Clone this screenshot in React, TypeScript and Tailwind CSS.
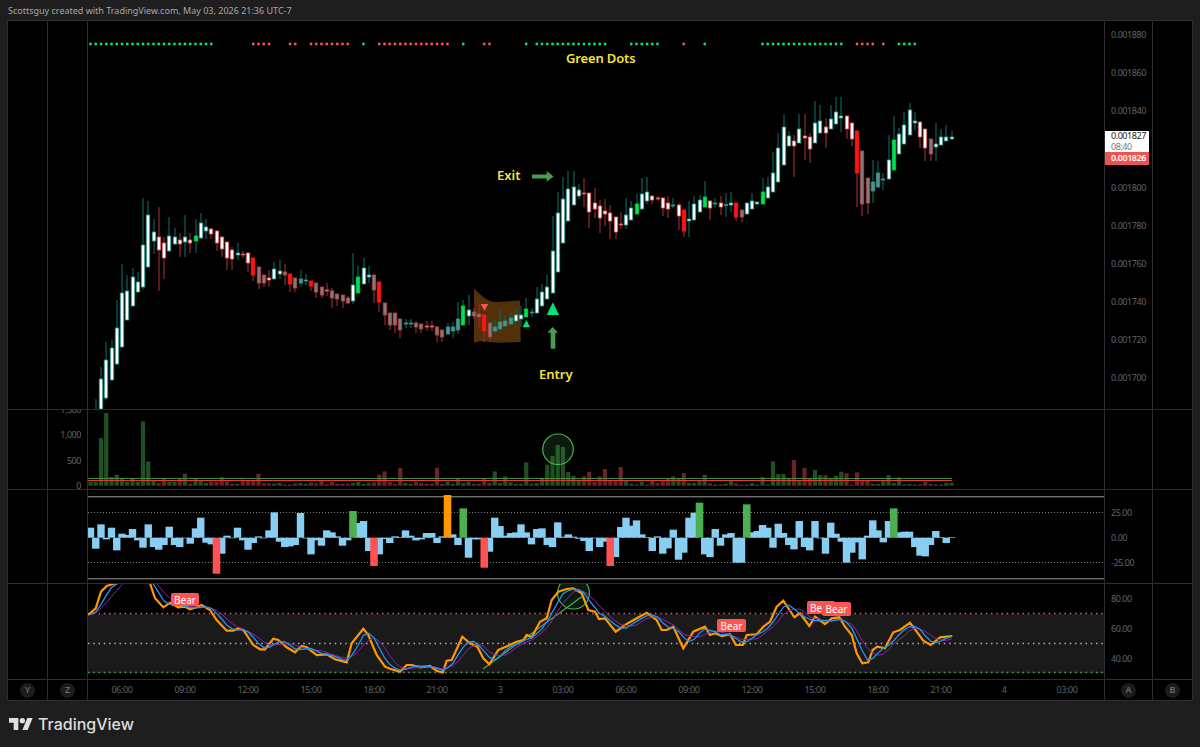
const xAt = (i: number) => 122 + 5.25 * i;

// wick top, body top, body bottom, wick bottom, kind (starts at bar -5)
const candles: [number, number, number, number, string][] = [
  [399, 409.5, 411, 411, "w"], [367, 379, 409, 410, "w"], [342, 360, 398, 400, "w"], [340, 348, 380, 380, "w"], [300, 328, 364, 365, "w"],
  [264, 293, 347, 347, "w"], [275, 291, 320, 320, "w"], [268, 277, 306, 306, "w"], [272, 282, 292, 292, "w"], [198, 245, 287, 289, "w"],
  [201, 215, 267, 267, "w"], [219, 232, 241, 254, "w"], [207, 237, 250, 291, "r"], [237, 243, 258, 279, "r"], [217, 236, 251, 251, "w"],
  [228, 237, 244, 245, "w"], [233, 240, 244, 257, "r"], [215, 237, 242, 257, "w"], [233, 240, 243, 253, "r"], [219, 236, 241, 253, "g"],
  [213, 223, 238, 239, "w"], [219, 227, 231, 239, "w"], [228, 229, 234, 239, "r"], [230, 231, 243, 251, "r"], [237, 237, 249, 257, "r"],
  [242, 242, 258, 270, "r"], [247, 250, 259, 270, "r"], [243, 253, 255, 260, "w"], [251, 254, 255, 258, "r"], [253, 253, 263, 272, "r"],
  [258, 258, 275, 281, "R"], [267, 267, 283, 289, "y"], [275, 275, 283, 287, "y"], [270, 278, 280, 287, "r"], [262, 269, 279, 279, "w"],
  [260, 271, 274, 279, "w"], [264, 272, 275, 285, "y"], [274, 274, 284, 292, "R"], [278, 278, 288, 292, "y"], [270, 279, 283, 287, "x"],
  [274, 280, 281, 285, "w"], [281, 281, 286, 291, "R"], [283, 283, 292, 298, "y"], [287, 287, 295, 298, "y"], [283, 290, 291, 296, "r"],
  [288, 291, 298, 308, "y"], [294, 294, 299, 306, "y"], [295, 295, 301, 308, "y"], [296, 298, 303, 304, "y"], [253, 285, 301, 304, "w"],
  [266, 277, 293, 293, "g"], [258, 268, 284, 284, "w"], [266, 275, 277, 283, "w"], [275, 275, 290, 303, "y"], [282, 282, 302, 312, "R"],
  [303, 303, 315, 325, "y"], [313, 313, 325, 330, "y"], [313, 313, 325, 333, "y"], [319, 319, 330, 338, "y"], [319, 323, 324, 328, "x"],
  [319, 323, 324, 328, "x"], [321, 323, 327, 333, "y"], [324, 324, 329, 333, "y"], [321, 326, 327, 331, "r"], [321, 326, 327, 331, "r"],
  [326, 327, 335, 342, "y"], [330, 330, 337, 342, "y"], [323, 327, 334, 334, "x"], [322, 327, 331, 338, "x"], [302, 319, 330, 334, "x"],
  [300, 306, 325, 325, "g"], [295, 310, 316, 325, "w"], [308, 312, 316, 319, "y"], [303, 314, 317, 327, "y"], [315, 315, 331, 342, "R"],
  [323, 323, 337, 342, "y"], [319, 327, 331, 333, "x"], [310, 322, 329, 329, "x"], [315, 321, 326, 326, "x"], [313, 318, 324, 324, "x"],
  [309, 315, 321, 321, "w"], [306, 315, 319, 327, "w"], [298, 309, 317, 317, "g"], [308, 312, 313, 317, "x"], [287, 299, 313, 313, "w"],
  [284, 292, 306, 306, "w"], [275, 287, 299, 299, "w"], [216, 251, 293, 293, "w"], [192, 213, 272, 272, "w"], [177, 199, 243, 243, "w"],
  [171, 189, 221, 221, "w"], [171, 187, 205, 205, "w"], [184, 190, 196, 199, "w"], [178, 193, 194, 207, "r"], [193, 193, 212, 228, "r"],
  [188, 203, 209, 218, "r"], [200, 206, 218, 233, "r"], [199, 211, 214, 226, "r"], [205, 213, 221, 239, "r"], [217, 217, 232, 239, "r"],
  [212, 224, 225, 229, "r"], [198, 215, 225, 229, "w"], [201, 208, 220, 220, "w"], [194, 204, 214, 214, "g"], [178, 194, 209, 209, "w"],
  [177, 192, 201, 204, "w"], [196, 196, 200, 204, "r"], [196, 198, 199, 201, "r"], [198, 198, 208, 216, "r"], [196, 203, 209, 218, "r"],
  [198, 205, 206, 208, "x"], [203, 205, 216, 230, "r"], [210, 210, 231, 237, "R"], [201, 219, 221, 237, "w"], [196, 204, 220, 220, "w"],
  [195, 200, 212, 212, "w"], [181, 197, 207, 207, "g"], [200, 201, 208, 220, "r"], [198, 203, 204, 207, "x"], [196, 203, 207, 215, "r"],
  [193, 204.5, 205.5, 217, "x"], [192, 203, 205, 212, "w"], [203, 203, 217, 221, "R"], [210, 210, 217, 222, "y"], [203, 203, 214, 214, "w"],
  [193, 201, 209, 209, "w"], [202, 202, 204, 204, "w"], [178, 192, 204, 204, "g"], [177, 187, 198, 198, "w"], [152, 173, 192, 192, "w"],
  [133, 148, 182, 182, "w"], [114, 127, 165, 165, "w"], [131, 136, 146, 146, "w"], [135, 141, 146, 177, "r"], [114, 129, 143, 143, "w"],
  [114, 136, 138, 160, "r"], [133, 137, 149, 163, "r"], [101, 123, 143, 143, "w"], [105, 121, 133, 133, "w"], [118, 127, 133, 148, "r"],
  [105, 119, 129, 129, "w"], [97, 112, 124, 124, "w"], [97, 116, 118, 132, "w"], [116, 116, 129, 139, "r"], [123, 123, 139, 146, "r"],
  [131, 131, 173, 207, "R"], [151, 151, 204, 216, "y"], [178, 178, 203, 214, "y"], [160, 182, 191, 203, "x"], [161, 173, 187, 187, "x"],
  [173, 179, 180, 190, "x"], [135, 160, 179, 179, "w"], [116, 140, 170, 170, "g"], [128, 134, 154, 154, "w"], [112, 125, 144, 144, "w"],
  [103, 110, 135, 135, "w"], [112, 121, 123, 130, "w"], [122, 122, 137, 148, "r"], [129, 129, 148, 161, "r"], [139, 139, 154, 161, "y"],
  [123, 144, 147, 161, "w"], [129, 137, 145, 145, "w"], [125, 137, 141, 141, "w"], [131, 137, 139, 139, "w"],
];

const kinds: Record<string, { fill: string; line: string; wick: string }> = {
  w: { fill: "#ffffff", line: "#1c9a8c", wick: "#0f5f57" },
  r: { fill: "#ffffff", line: "#e5484d", wick: "#8e2b2b" },
  g: { fill: "#00e052", line: "#00c94a", wick: "#0f5f57" },
  R: { fill: "#ff1414", line: "#ff1414", wick: "#8e2b2b" },
  x: { fill: "#64888c", line: "#1c9a8c", wick: "#0f5f57" },
  y: { fill: "#7c7c7c", line: "#b83c40", wick: "#8e2b2b" },
};

const dotRuns: [number, number, string][] = [
  [-6, 17, "#00e676"], [25, 28, "#ff5252"], [32, 33, "#ff5252"], [36, 43, "#ff5252"], [46, 46, "#00e676"], [49, 62, "#ff5252"],
  [65, 65, "#00e676"], [69, 70, "#ff5252"], [77, 77, "#00e676"], [79, 92, "#00e676"], [97, 102, "#00e676"], [107, 107, "#ff5252"],
  [111, 111, "#00e676"], [122, 137, "#00e676"], [140, 143, "#ff5252"], [145, 145, "#ff5252"], [148, 151, "#00e676"],
];

// volume bars from -6, height * 3, positive green, negative red
const volume = [
  12, 12, 143, 218, 26, 33, 20, 12, 23, 12, 193, 73, 14, -8, -23, 11, 11, -21, 36, -6, 20, 14, 8, -12, -12, -26, -12, -6, 6, -18,
  -15, -15, -36, -7, -7, 6, 8, -4, -4, -7, 8, 6, -9, -7, -15, -5, -11, -6, -6, -6, 8, 11, 5, 8, -10, -33, -43, -11, -5, -53, 8, 6,
  -11, -8, -6, -6, -54, -6, 12, 6, 20, 8, 12, -6, -6, -20, -8, 43, 8, 28, 10, 6, 6, 70, 6, 8, 22, 63, 89, 122, 116, 41, 30, 18,
  -28, -42, -11, -28, -50, -16, -16, -56, 14, 6, 4, 13, 4, -16, -8, -16, -20, 28, 22, -38, 8, 8, 14, 33, -7, 4, -4, 6, 14, -7, -4,
  4, 8, 4, 26, 4, 73, 35, 35, 22, -77, 14, -53, -22, 47, 32, -32, 22, 30, 42, -37, -4, -40, -16, -16, 6, 6, 14, 32, 8, 25, 4, 5, 4,
  -4, -11, -6, 4, 4, 8, 9,
];

// histogram from -6, value * 3 above the zero line
const hist = [
  30, -33, 40, -5, 30, -38, 12, 8, 26, -8, -30, 40, -28, -36, -22, 33, -22, -28, 0, -18, 28, 60, -15, -20, -108, -48, 6, -1, 30, -8,
  -36, -16, 4, 0, 22, 76, -12, -28, -26, -22, 74, -2, -50, -8, -24, 22, 16, 4, -24, -8, 80, 44, 50, -40, -85, -50, -4, -16, 4, 2, 22,
  6, -8, -5, 14, 14, -16, 4, 128, 10, -22, 88, -60, -5, -5, -90, -42, 60, 35, 6, 14, 16, 40, 16, -20, 26, 28, -22, -28, 46, 3, 10, 3,
  -3, -10, -40, 0, -28, -12, -85, -58, 32, 60, 36, 52, 10, 2, -40, 4, -48, -32, 24, -66, -45, 60, 75, 105, -50, -58, 26, -24, 10, 14,
  -75, -75, 100, 16, 20, 38, 30, -30, 42, 14, -22, -35, 50, -28, -38, 50, -2, -48, 45, 12, -12, -75, -45, -14, -65, 6, 52, 22, -14,
  50, 88, 16, 18, 18, -28, -54, -56, -22, 20, 2, -16, 2,
];
const histColor: Record<number, string> = {
  18: "#ff5252", 44: "#4caf50", 48: "#ff5252", 62: "#ff9800", 65: "#4caf50", 69: "#ff5252", 93: "#ff5252", 110: "#4caf50", 119: "#4caf50", 147: "#4caf50",
};

// orange line read in three strips of the picture
const orange: [number, number][] = [
  ...[[265, 645], [287, 625], [303, 575], [320, 558], [345, 550], [380, 520], [420, 525], [450, 550], [465, 595], [490, 622], [510, 608], [535, 622], [555, 620], [570, 628], [590, 622], [605, 615], [630, 630], [650, 660], [680, 692], [700, 692], [715, 685], [730, 690], [760, 735], [780, 748], [795, 748], [820, 716], [835, 720], [860, 742], [885, 757], [905, 738], [920, 742], [950, 765], [980, 763], [1005, 778], [1040, 787], [1055, 730], [1090, 686], [1105, 705], [1130, 765], [1155, 800], [1170, 806]].map(([a, b]) => [a / 3, 400 + b / 3] as [number, number]),
  ...[[0, 815], [20, 795], [35, 795], [60, 802], [90, 798], [110, 812], [128, 818], [140, 782], [155, 780], [187, 710], [210, 730], [232, 740], [250, 775], [268, 793], [295, 750], [325, 737], [350, 725], [370, 720], [380, 705], [395, 712], [420, 665], [440, 655], [455, 600], [475, 575], [500, 567], [520, 565], [545, 580], [565, 630], [585, 635], [597, 657], [615, 655], [647, 695], [680, 672], [710, 655], [740, 638], [770, 660], [785, 690], [800, 690], [820, 680], [850, 745], [880, 695], [915, 680], [930, 705], [945, 700], [965, 708], [990, 703], [1008, 735], [1028, 735], [1040, 705], [1070, 703], [1090, 680], [1110, 665], [1130, 620], [1150, 602], [1183, 652]].map(([a, b]) => [400 + a / 3, 400 + b / 3] as [number, number]),
  ...[[0, 640], [28, 678], [45, 650], [75, 672], [95, 655], [118, 652], [135, 680], [155, 705], [170, 760], [187, 790], [205, 787], [218, 750], [232, 740], [255, 745], [280, 697], [300, 690], [330, 668], [350, 695], [370, 722], [392, 735], [420, 712], [457, 708]].map(([a, b]) => [800 + a / 3, 400 + b / 3] as [number, number]),
];

const orangeAt = (x: number) => {
  for (let k = 1; k < orange.length; k++) {
    if (x <= orange[k][0]) {
      const [x0, y0] = orange[k - 1];
      const [x1, y1] = orange[k];
      return y0 + ((y1 - y0) * (x - x0)) / (x1 - x0 || 1);
    }
  }
  return orange[orange.length - 1][1];
};

const smooth = (len: number) => {
  const out: string[] = [];
  for (let i = -6; i <= 158; i++) {
    let sum = 0;
    for (let k = 0; k < len; k++) sum += orangeAt(Math.max(88.5, xAt(i - k)));
    out.push(`${xAt(i)},${(sum / len).toFixed(1)}`);
  }
  return out.join(" ");
};

const toPoints = (pts: [number, number][]) => pts.map(([a, b]) => `${a.toFixed(1)},${b.toFixed(1)}`).join(" ");

const MainPane = () => (
  <svg width="1016" height="388" viewBox="88 21 1016 388" className="block">
    {dotRuns.flatMap(([a, b, c]) =>
      Array.from({ length: b - a + 1 }, (_, k) => <circle key={`${a}-${k}`} cx={xAt(a + k)} cy="44" r="1.4" fill={c} />)
    )}
    <path d="M474 288.5C481 295 487 302 496 302L520 300.5L520.7 342L498 342.7L480 341L474 342.7Z" fill="#52300a" />
    {candles.map(([wt, bt, bb, wb, kind], n) => {
      const x = Math.round(xAt(n - 5));
      const k = kinds[kind];
      return (
        <g key={n}>
          <rect x={x - 0.6} y={wt} width="1.2" height={wb - wt} fill={k.wick} />
          <rect x={x - 1.75} y={bt} width="3.5" height={Math.max(bb - bt, 0.6)} fill={k.fill} stroke={k.line} strokeWidth="0.8" />
        </g>
      );
    })}
    <polygon points="480.7,304 488.3,304 484.5,310.7" fill="#ff5252" />
    <polygon points="522.7,327.3 530,327.3 526.4,320" fill="#00e676" />
    <polygon points="546.7,315 559,315 552.9,302.3" fill="#00e676" />
    <path d="M532 174.4H546.7V171L553.5 176.4L546.7 181.7V178.6H532Z" fill="#4a9d4e" />
    <path d="M550.7 348.7V332.7H547.3L552.7 327L558 332.7H555.3V348.7Z" fill="#4a9d4e" />
  </svg>
);

const VolumePane = () => (
  <svg width="1016" height="79" viewBox="88 410 1016 79" className="block">
    {volume.map((v, n) => {
      const h = Math.abs(v) / 3;
      return <rect key={n} x={xAt(n - 6) - 2.1} y={485.7 - h} width="4.2" height={h} fill={v > 0 ? "#1f5024" : "#6c2327"} />;
    })}
    <rect x="88" y="478" width="864" height="1" fill="#3c8f40" />
    <rect x="88" y="480" width="864" height="1" fill="#e53935" />
    <circle cx="558" cy="449.3" r="15.3" fill="#4caf50" fillOpacity="0.15" stroke="#4caf50" strokeWidth="1.2" />
  </svg>
);

const HistPane = () => (
  <svg width="1016" height="93" viewBox="88 490 1016 93" className="block">
    <rect x="88" y="496" width="1016" height="1.4" fill="#6e6e6e" />
    <rect x="88" y="578" width="1016" height="1.4" fill="#6e6e6e" />
    <line x1="88" x2="1104" y1="512.5" y2="512.5" stroke="#7a7a7a" strokeDasharray="1 2" />
    <line x1="88" x2="1104" y1="562.5" y2="562.5" stroke="#7a7a7a" strokeDasharray="1 2" />
    {hist.map((v, n) =>
      histColor[n - 6] ? null : (
        <rect key={n} x={xAt(n - 6) - 3.7} y={537.7 - Math.max(v, 0) / 3} width="7.4" height={Math.max(Math.abs(v) / 3, 0.6)} fill="#88cef2" />
      )
    )}
    {hist.map((v, n) =>
      histColor[n - 6] ? (
        <rect key={n} x={xAt(n - 6) - 3.8} y={537.7 - Math.max(v, 0) / 3} width="7.6" height={Math.abs(v) / 3} fill={histColor[n - 6]} />
      ) : null
    )}
  </svg>
);

const StochPane = () => (
  <svg width="1016" height="95" viewBox="88 584 1016 95" className="block">
    <rect x="88" y="614" width="1016" height="59" fill="#1a1a1a" />
    <line x1="88" x2="1104" y1="613.5" y2="613.5" stroke="#ff5252" strokeDasharray="1.5 3.75" strokeWidth="1.4" />
    <line x1="88" x2="1104" y1="643.5" y2="643.5" stroke="#b0b0b0" strokeDasharray="1.5 3.75" strokeWidth="1.4" />
    <line x1="88" x2="1104" y1="672.5" y2="672.5" stroke="#4caf50" strokeDasharray="1.5 3.75" strokeWidth="1.4" />
    <circle cx="573.5" cy="593" r="16" fill="#4caf50" fillOpacity="0.15" stroke="#4caf50" strokeWidth="1.2" />
    <line x1="483.3" y1="668.7" x2="581.7" y2="596.7" stroke="#4caf50" strokeWidth="1.2" />
    <polyline points={toPoints(orange)} fill="none" stroke="#ff9800" strokeWidth="2.2" />
    <polyline points={smooth(5)} fill="none" stroke="#8e24aa" strokeWidth="1" />
    <polyline points={smooth(3)} fill="none" stroke="#2196f3" strokeWidth="1.3" />
  </svg>
);

const Round = ({ children }: { children: string }) => (
  <span className="flex h-[15px] w-[15px] items-center justify-center rounded-full bg-[#1c1c1c] text-[9px] font-semibold tracking-normal text-[#6a6a6a]">
    {children}
  </span>
);

const Bear = ({ className }: { className: string }) => (
  <span className={`absolute flex items-center justify-center rounded-[2px] bg-[#ff5252] text-[10px] leading-none tracking-normal text-white ${className}`}>Bear</span>
);

const prices = ["0.001880", "0.001860", "0.001840", "0.001820", "0.001800", "0.001780", "0.001760", "0.001740", "0.001720", "0.001700"];
const ticks = ["06:00", "09:00", "12:00", "15:00", "18:00", "21:00", "3", "03:00", "06:00", "09:00", "12:00", "15:00", "18:00", "21:00", "4", "03:00"];

const Row = ({ className, side, right, children }: { className: string; side?: React.ReactNode; right?: React.ReactNode; children: React.ReactNode }) => (
  <div className={`flex border-b border-[#2c2c31] ${className}`}>
    <div className="w-[40px] shrink-0 border-r border-[#2c2c31]" />
    <div className="w-[40px] shrink-0 overflow-hidden border-r border-[#2c2c31]">{side}</div>
    <div className="relative w-[1017px] shrink-0 overflow-hidden border-r border-[#2c2c31]">{children}</div>
    <div className="w-[48px] shrink-0 overflow-hidden border-r border-[#2c2c31]">{right}</div>
    <div className="flex-1" />
  </div>
);

export default function App() {
  return (
    <div className="h-[747px] w-[1200px] overflow-hidden bg-[#1e1e1e] font-['Noto_Sans',sans-serif] text-[9px] tracking-[-0.45px] text-[#636366]">
      <div className="h-[20px] pl-[8px] text-[9px] leading-[22px] tracking-normal text-[#a8a8a8]">Scottsguy created with TradingView.com, May 03, 2026 21:36 UTC-7</div>
      <div className="ml-[7px] h-[681px] w-[1186px] border border-[#2c2c31] bg-black">
        <Row
          className="h-[389px]"
          right={
            <div className="-mt-[5px] flex flex-col pl-[6px]">
              {prices.map((p) => (
                <span key={p} className="flex h-[38.1px] shrink-0 items-center">{p}</span>
              ))}
            </div>
          }
        >
          <MainPane />
          <span className="absolute left-[478px] top-[28px] text-[13px] font-semibold leading-[18px] tracking-[-0.15px] text-[#f5e437]">Green Dots</span>
          <span className="absolute left-[409px] top-[145px] text-[13px] font-semibold leading-[18px] tracking-normal text-[#f5e437]">Exit</span>
          <span className="absolute left-[451px] top-[344px] text-[13px] font-semibold leading-[18px] tracking-normal text-[#f5e437]">Entry</span>
        </Row>
        <Row
          className="h-[80px]"
          side={
            <div className="-mt-[13px] flex flex-col items-end pr-[6px]">
              {["1,500", "1,000", "500", "0"].map((v) => (
                <span key={v} className="flex h-[25.4px] shrink-0 items-center">{v}</span>
              ))}
            </div>
          }
        >
          <VolumePane />
        </Row>
        <Row
          className="h-[94px]"
          right={
            <div className="flex flex-col pl-[6px] pt-[10px]">
              {["25.00", "0.00", "-25.00"].map((v) => (
                <span key={v} className="flex h-[25px] shrink-0 items-center">{v}</span>
              ))}
            </div>
          }
        >
          <HistPane />
        </Row>
        <Row
          className="h-[96px]"
          right={
            <div className="flex flex-col pl-[6px]">
              {["80.00", "60.00", "40.00"].map((v) => (
                <span key={v} className="flex h-[30px] shrink-0 items-center">{v}</span>
              ))}
            </div>
          }
        >
          <StochPane />
          <Bear className="left-[83px] top-[9px] h-[13px] w-[28px]" />
          <Bear className="left-[629px] top-[35px] h-[13px] w-[29px]" />
          <Bear className="left-[719px] top-[17px] h-[13px] w-[28px]" />
          <Bear className="left-[734px] top-[18px] h-[14px] w-[29px]" />
        </Row>
        <div className="flex h-[20px]">
          <div className="flex w-[40px] shrink-0 items-center justify-center border-r border-[#2c2c31]"><Round>Y</Round></div>
          <div className="flex w-[40px] shrink-0 items-center justify-center border-r border-[#2c2c31]"><Round>Z</Round></div>
          <div className="flex w-[1017px] shrink-0 items-center border-r border-[#2c2c31] pl-[2.5px]">
            {ticks.map((t, n) => (
              <span key={n} className="w-[63px] shrink-0 text-center">{t}</span>
            ))}
          </div>
          <div className="flex w-[48px] shrink-0 items-center justify-center border-r border-[#2c2c31]"><Round>A</Round></div>
          <div className="flex flex-1 items-center justify-center"><Round>B</Round></div>
        </div>
      </div>
      <div className="flex items-center gap-[5px] pl-[9px] pt-[12px]">
        <svg width="24" height="16" viewBox="0 4 36 18" className="shrink-0" fill="#e0e0e0">
          <path d="M14 22H7V11H0V4h14v18zM28 22h-8l7.5-18h8L28 22z" />
          <circle cx="20" cy="8" r="4" />
        </svg>
        <span className="text-[16px] font-medium leading-[22px] tracking-normal text-[#dedede] font-['Inter',sans-serif]">TradingView</span>
      </div>
      <div className="absolute left-[1105px] top-[131px] w-[44px] bg-white text-[9px] leading-[10.5px]">
        <div className="flex h-[21px] flex-col justify-center pl-[6px] text-[#222]">
          <span>0.001827</span>
          <span className="text-[#777]">08:40</span>
        </div>
        <div className="flex h-[13px] items-center bg-[#ef5350] pl-[6px] font-semibold text-white">0.001826</div>
      </div>
    </div>
  );
}
